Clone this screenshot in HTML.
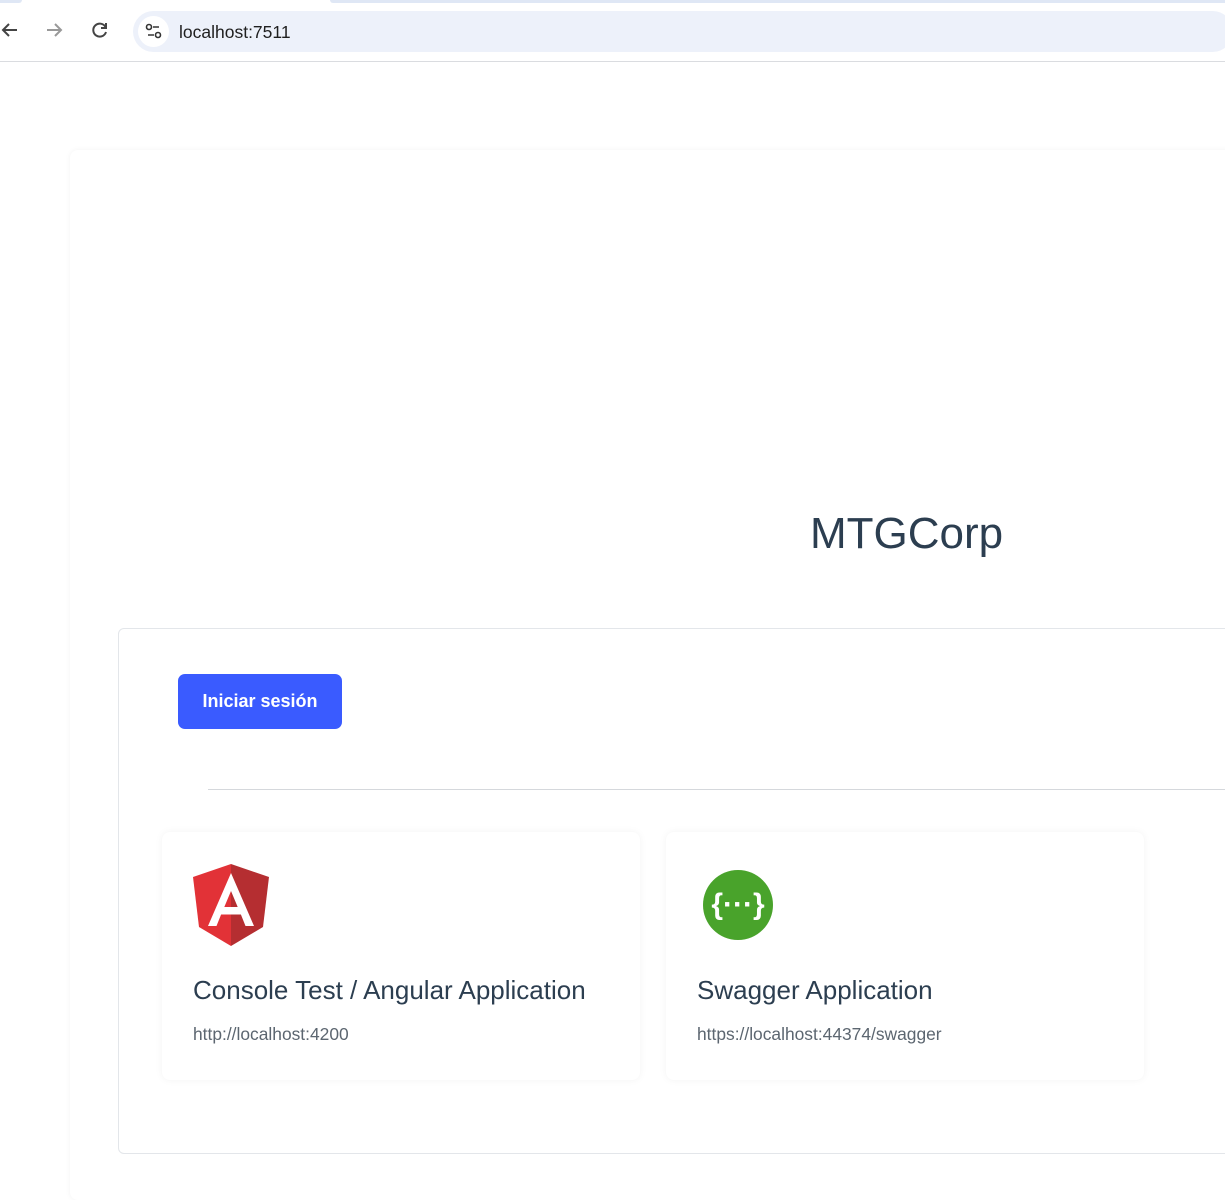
<!DOCTYPE html>
<html><head><meta charset="utf-8"><style>
*{box-sizing:border-box;margin:0;padding:0}
html,body{width:1225px;height:1158px;overflow:hidden;background:#fff;font-family:"Liberation Sans",Arial,sans-serif}
.top{position:absolute;left:0;top:0;width:1225px;height:62px;background:#fff;border-bottom:1px solid #dadce0}
.tabs{position:absolute;top:0;left:0;width:1225px;height:3px}
.tabs .a{position:absolute;left:0;top:0;width:22px;height:3px;background:#dfe7f5;border-radius:0 0 8px 0}
.tabs .b{position:absolute;left:330px;top:0;width:895px;height:3px;background:#dfe7f5;border-radius:0 0 0 8px}
.omni{position:absolute;left:133px;top:11px;width:1100px;height:41px;background:#edf1fa;border-radius:21px}
.omni .ic{position:absolute;left:5px;top:5px;width:31px;height:31px;border-radius:50%;background:#fff}
.omni .t{position:absolute;left:46px;top:11px;font-size:17.5px;color:#1f1f1f}
.nav{position:absolute;top:20px}
.outer{position:absolute;left:70px;top:150px;width:1200px;height:1050px;border-radius:8px;box-shadow:0 0 6px rgba(0,0,0,.05);background:#fff}
h1{position:absolute;left:810px;top:509px;font-size:44px;font-weight:400;color:#2c3e50}
.inner{position:absolute;left:118px;top:628px;width:1150px;height:526px;border:1px solid #e3e6ea;border-radius:6px;background:#fff}
.btn{position:absolute;left:178px;top:674px;width:164px;height:55px;background:#3a5bff;border-radius:7px;color:#fff;font-weight:700;font-size:18px;text-align:center;line-height:55px}
.hr{position:absolute;left:208px;top:789px;width:1020px;height:1px;background:#d5d8dc}
.card{position:absolute;top:832px;height:248px;width:478px;border-radius:8px;box-shadow:0 0 8px rgba(0,0,0,.05);background:#fff}
.card .ti{position:absolute;left:31px;top:143px;font-size:26px;color:#2c3e50;white-space:nowrap}
.card .u{position:absolute;left:31px;top:192px;font-size:17.4px;color:#5c6670}
</style></head><body>
<div class="top">
 <div class="tabs"><div class="a"></div><div class="b"></div></div>
 <svg class="nav" style="left:0" width="20" height="20" viewBox="0 0 20 20"><path d="M17 10H3M9 4L3 10l6 6" stroke="#444" stroke-width="2" fill="none"/></svg>
 <svg class="nav" style="left:44px" width="20" height="20" viewBox="0 0 20 20"><path d="M3 10h14M11 4l6 6-6 6" stroke="#999" stroke-width="2" fill="none"/></svg>
 <svg class="nav" style="left:90px" width="20" height="20" viewBox="0 0 20 20"><path d="M15.5 7A6.5 6.5 0 1 0 16 12" stroke="#444" stroke-width="2" fill="none"/><path d="M16 3v5h-5" stroke="#444" stroke-width="2" fill="none"/></svg>
 <div class="omni"><div class="ic"><svg width="31" height="31" viewBox="0 0 31 31"><circle cx="11" cy="11" r="2.5" stroke="#333" stroke-width="1.6" fill="none"/><path d="M15 11h6M10 19h6" stroke="#333" stroke-width="1.6"/><circle cx="20" cy="19" r="2.5" stroke="#333" stroke-width="1.6" fill="none"/></svg></div><div class="t">localhost:7511</div></div>
</div>
<div class="outer"></div>
<h1>MTGCorp</h1>
<div class="inner"></div>
<div class="btn">Iniciar sesión</div>
<div class="hr"></div>
<div class="card" style="left:162px">
 <svg style="position:absolute;left:31px;top:32px" width="76" height="82" viewBox="0 0 76 82">
  <path d="M38 0L0 13l6 50 32 19z" fill="#e23237"/><path d="M38 0l38 13-6 50-32 19z" fill="#b52e31"/>
  <path d="M38 9L15 62h8.5l4.6-11.5h19.8L52.5 62H61zM31.3 43L38 27l6.7 16z" fill="#fff"/>
 </svg>
 <div class="ti">Console Test / Angular Application</div>
 <div class="u">http://localhost:4200</div>
</div>
<div class="card" style="left:666px">
 <svg style="position:absolute;left:37px;top:38px" width="70" height="70" viewBox="0 0 70 70">
  <circle cx="35" cy="35" r="35" fill="#49a32b"/>
  <text x="35" y="44" font-family="Liberation Sans,sans-serif" font-size="30" font-weight="700" fill="#fff" text-anchor="middle">{···}</text>
 </svg>
 <div class="ti">Swagger Application</div>
 <div class="u">https://localhost:44374/swagger</div>
</div>
</body></html>
